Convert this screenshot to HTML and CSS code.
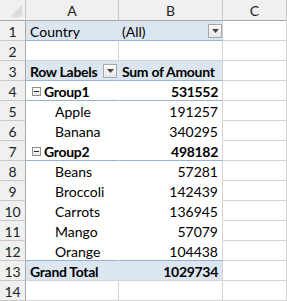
FILE: index.html
```html
<!DOCTYPE html>
<html>
<head>
<meta charset="utf-8">
<link rel="stylesheet" href="styles.css">
</head>
<body>
<div class="sheet">
  <div class="hd corner"><svg class="tri" width="12" height="12" viewBox="0 0 12 12"><polygon points="12,0 12,12 0,12" fill="#dcdcdc"/></svg></div>
  <div class="hd">A</div>
  <div class="hd">B</div>
  <div class="hd">C</div>

  <div class="rh">1</div>
  <div class="c fill a blueb">Country</div>
  <div class="c fill blueb b-filter">(All)<span class="dd"><svg width="7" height="4" viewBox="0 0 7 4"><polygon points="0,0 7,0 3.5,4" fill="#444"/></svg></span></div>
  <div class="c"></div>

  <div class="rh">2</div>
  <div class="c"></div>
  <div class="c"></div>
  <div class="c"></div>

  <div class="rh">3</div>
  <div class="c fill a blueb bold lbl">Row Labels<span class="dd"><svg width="7" height="4" viewBox="0 0 7 4"><polygon points="0,0 7,0 3.5,4" fill="#444"/></svg></span></div>
  <div class="c fill blueb bold">Sum of Amount</div>
  <div class="c"></div>

  <div class="rh">4</div>
  <div class="c pv a blueb bold grp"><span class="tog"></span>Group1</div>
  <div class="c pv blueb bold num">531552</div>
  <div class="c"></div>

  <div class="rh">5</div>
  <div class="c pv a item">Apple</div>
  <div class="c pv num">191257</div>
  <div class="c"></div>

  <div class="rh">6</div>
  <div class="c pv a item">Banana</div>
  <div class="c pv num">340295</div>
  <div class="c"></div>

  <div class="rh">7</div>
  <div class="c pv a blueb bold grp"><span class="tog"></span>Group2</div>
  <div class="c pv blueb bold num">498182</div>
  <div class="c"></div>

  <div class="rh">8</div>
  <div class="c pv a item">Beans</div>
  <div class="c pv num">57281</div>
  <div class="c"></div>

  <div class="rh">9</div>
  <div class="c pv a item">Broccoli</div>
  <div class="c pv num">142439</div>
  <div class="c"></div>

  <div class="rh">10</div>
  <div class="c pv a item">Carrots</div>
  <div class="c pv num">136945</div>
  <div class="c"></div>

  <div class="rh">11</div>
  <div class="c pv a item">Mango</div>
  <div class="c pv num">57079</div>
  <div class="c"></div>

  <div class="rh">12</div>
  <div class="c pv a blueb item">Orange</div>
  <div class="c pv blueb num">104438</div>
  <div class="c"></div>

  <div class="rh">13</div>
  <div class="c fill a bold">Grand Total</div>
  <div class="c fill bold num">1029734</div>
  <div class="c"></div>

  <div class="rh">14</div>
  <div class="c"></div>
  <div class="c"></div>
  <div class="c"></div>
</div>
</body>
</html>
```

FILE: styles.css
```css
html, body {
  margin: 0;
  padding: 0;
  background: #ffffff;
}

.sheet {
  display: grid;
  grid-template-columns: 26px 93px 104px 64px;
  grid-template-rows: 21px repeat(14, 20px);
  width: 287px;
  font-family: "Lato", "Liberation Sans", sans-serif;
  font-size: 14px;
  color: #000;
}

.sheet > div {
  box-sizing: border-box;
  border-right: 1px solid #d4d4d4;
  border-bottom: 1px solid #d4d4d4;
  white-space: nowrap;
  overflow: hidden;
  display: flex;
  align-items: center;
  line-height: 19px;
  padding-top: 1px;
}

.hd {
  background: #f0f0f0;
  justify-content: center;
  border-right-color: #c8c8c8 !important;
  border-bottom-color: #a9a9a9 !important;
  color: #222;
}

.corner {
  position: relative;
}

.tri {
  position: absolute;
  right: 3px;
  bottom: 3px;
}

.rh {
  background: #f0f0f0;
  justify-content: center;
  border-right-color: #a9a9a9 !important;
  border-bottom-color: #c8c8c8 !important;
  color: #222;
}

.c {
  padding-left: 3px;
  padding-right: 4px;
}

.a {
  padding-left: 4px;
}

.fill {
  background: #dce6f1;
}

.fill.a {
  border-right-color: #dce6f1 !important;
}

.pv {
  border-bottom-color: #ffffff !important;
}

.pv.a {
  border-right-color: #ffffff !important;
}

.blueb {
  border-bottom-color: #95b3d7 !important;
}

.bold {
  font-weight: bold;
  letter-spacing: -0.3px;
}

.num {
  justify-content: flex-end;
}

.item {
  padding-left: 29px;
}

.grp {
  padding-left: 6px;
}

.tog {
  width: 9px;
  height: 9px;
  box-sizing: border-box;
  border: 1px solid #8e8e8e;
  background: linear-gradient(#ffffff, #e6e6e6);
  margin-right: 3px;
  position: relative;
  flex: none;
}

.tog::after {
  content: "";
  position: absolute;
  left: 1px;
  right: 1px;
  top: 3px;
  height: 1px;
  background: #222;
}

.b-filter,
.lbl {
  justify-content: space-between;
  padding-right: 0;
}

.dd {
  width: 14px;
  height: 14px;
  box-sizing: border-box;
  border: 1px solid #a8a8a8;
  background: linear-gradient(#fbfbfb, #e8e8e8);
  display: flex;
  align-items: center;
  justify-content: center;
  flex: none;
  margin-top: -1px;
}

.lbl .dd {
  margin-right: 1px;
}
```
